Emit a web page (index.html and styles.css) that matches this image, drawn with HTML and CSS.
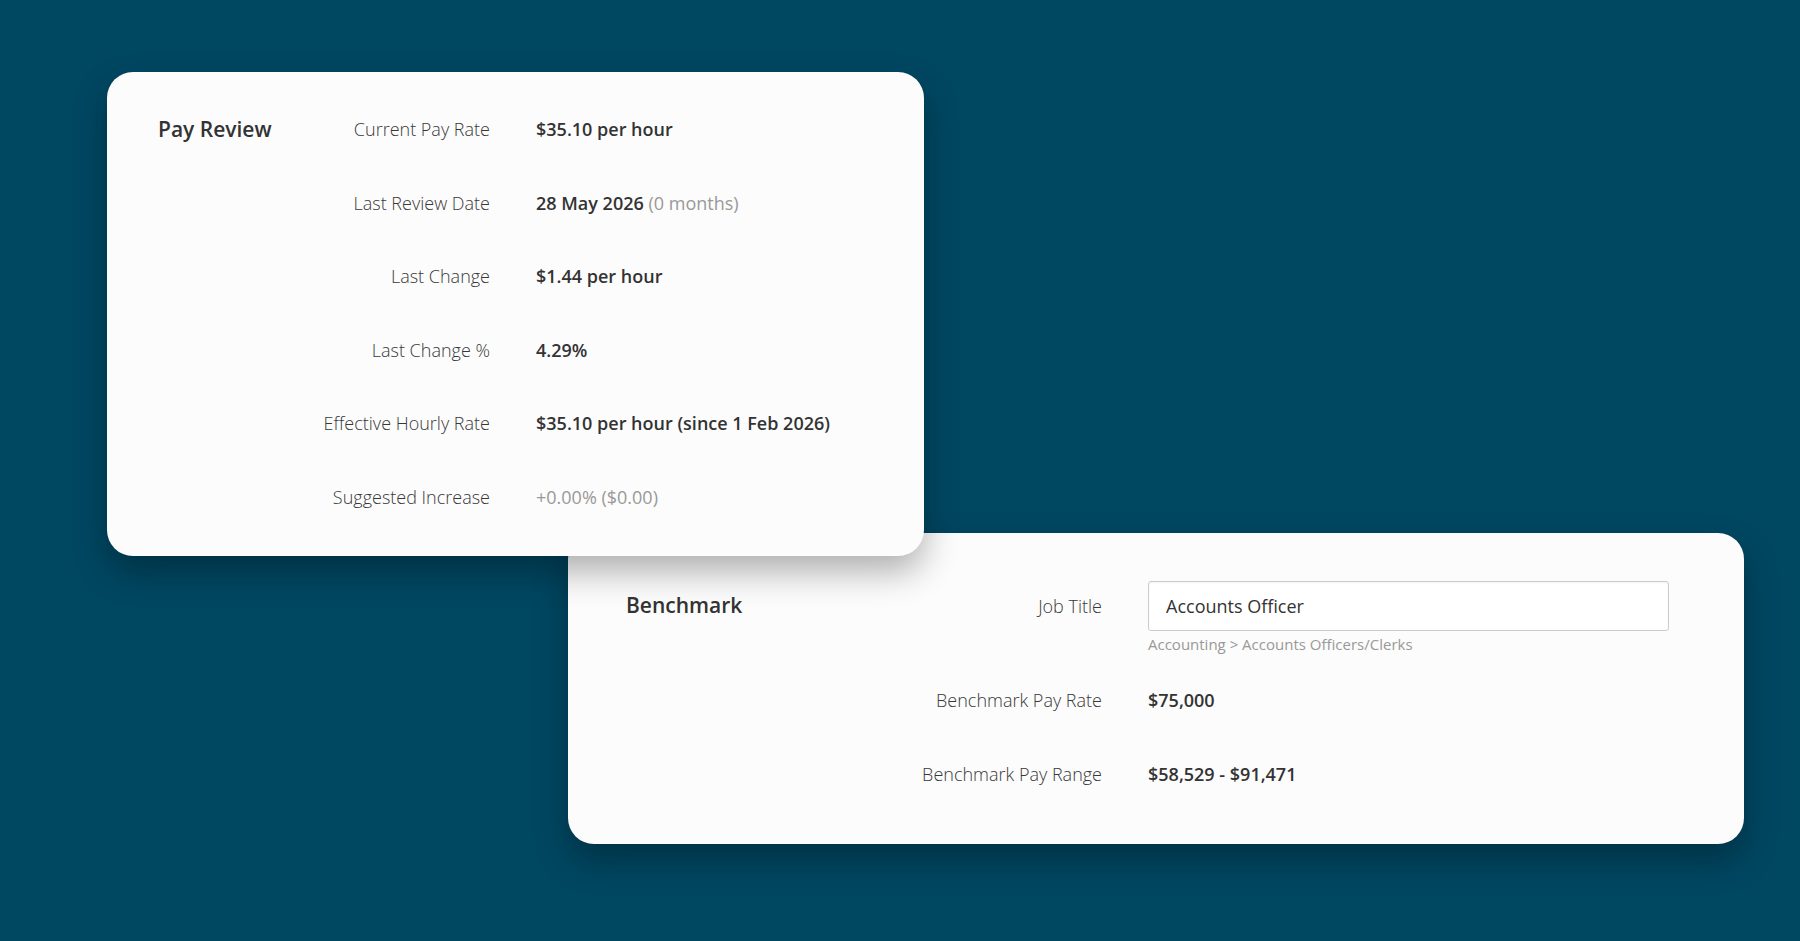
FILE: index.html
```html
<!DOCTYPE html>
<html lang="en">
<head>
    <meta charset="UTF-8">
    <meta name="viewport" content="width=device-width, initial-scale=1.0">
    <title>Pay Review</title>
    <link rel="stylesheet" href="styles.css">
</head>
<body>
    <div class="stage">
        <section class="card review-card">
            <h2 class="card-title">Pay Review</h2>
            <dl class="review-list">
                <dt>Current Pay Rate</dt>
                <dd>$35.10 per hour</dd>

                <dt>Last Review Date</dt>
                <dd>28 May 2026 <span class="muted">(0 months)</span></dd>

                <dt>Last Change</dt>
                <dd>$1.44 per hour</dd>

                <dt>Last Change %</dt>
                <dd>4.29%</dd>

                <dt>Effective Hourly Rate</dt>
                <dd>$35.10 per hour (since 1 Feb 2026)</dd>

                <dt>Suggested Increase</dt>
                <dd class="muted">+0.00% ($0.00)</dd>
            </dl>
        </section>

        <section class="card bench-card">
            <h2 class="card-title">Benchmark</h2>
            <div class="bench-list">
                <div class="field-row job-row">
                    <label for="jobTitle" class="field-label">Job Title</label>
                    <div class="field-value">
                        <input type="text" id="jobTitle" class="text-input" value="Accounts Officer">
                        <div class="hint">Accounting &gt; Accounts Officers/Clerks</div>
                    </div>
                </div>
                <div class="field-row">
                    <span class="field-label">Benchmark Pay Rate</span>
                    <span class="field-value strong">$75,000</span>
                </div>
                <div class="field-row">
                    <span class="field-label">Benchmark Pay Range</span>
                    <span class="field-value strong">$58,529 - $91,471</span>
                </div>
            </div>
        </section>
    </div>
</body>
</html>
```

FILE: styles.css
```css
body {
    margin: 0;
    background-color: #004762;
    font-family: "Open Sans", "Liberation Sans", sans-serif;
    color: #333;
    min-height: 941px;
}

.stage {
    padding-top: 72px;
}

.card {
    background-color: #fcfcfc;
    border-radius: 26px;
    box-shadow: 0 16px 34px rgba(0, 0, 0, 0.3);
    display: flex;
    align-items: flex-start;
    box-sizing: border-box;
}

.card-title {
    margin: 0;
    font-size: 21px;
    line-height: 24px;
    font-weight: 600;
    color: #333;
}

/* Pay review card */

.review-card {
    position: relative;
    z-index: 1;
    width: 817px;
    height: 484px;
    margin-left: 107px;
    padding: 45px 0 0 51px;
}

.review-card .card-title {
    width: 132px;
    flex-shrink: 0;
}

.review-list {
    margin: 0;
    display: grid;
    grid-template-columns: 200px 1fr;
    align-content: start;
    column-gap: 46px;
    row-gap: 49.5px;
    font-size: 18px;
    line-height: 24px;
}

.review-list dt {
    text-align: right;
    font-weight: 300;
    color: #383838;
}

.review-list dd {
    margin: 0;
    font-weight: 600;
    color: #333;
}

.muted,
.review-list dd.muted {
    font-weight: 400;
    color: #999;
}

/* Benchmark card */

.bench-card {
    width: 1176px;
    height: 311px;
    margin-top: -23px;
    margin-left: 568px;
    padding: 48px 75px 0 58px;
}

.bench-card .card-title {
    width: 226px;
    flex-shrink: 0;
    margin-top: 12px;
}

.bench-list {
    flex: 1;
    display: flex;
    flex-direction: column;
}

.field-row {
    display: flex;
    gap: 46px;
    font-size: 18px;
    line-height: 24px;
    margin-bottom: 50px;
}

.field-row:last-child {
    margin-bottom: 0;
}

.field-row.job-row {
    margin-bottom: 34px;
}

.field-label {
    width: 250px;
    flex-shrink: 0;
    text-align: right;
    font-weight: 300;
    color: #383838;
}

.job-row .field-label {
    padding-top: 13px;
}

.field-value {
    flex: 1;
}

.strong {
    font-weight: 600;
}

.text-input {
    display: block;
    width: 100%;
    height: 50px;
    box-sizing: border-box;
    padding: 0 17px;
    border: 1px solid #ccc;
    border-radius: 3px;
    background-color: #fff;
    box-shadow: inset 0 1px 2px rgba(0, 0, 0, 0.05);
    font-family: inherit;
    font-size: 18px;
    color: #333;
}

.hint {
    margin-top: 3px;
    font-size: 15px;
    line-height: 20px;
    color: #999;
}
```
